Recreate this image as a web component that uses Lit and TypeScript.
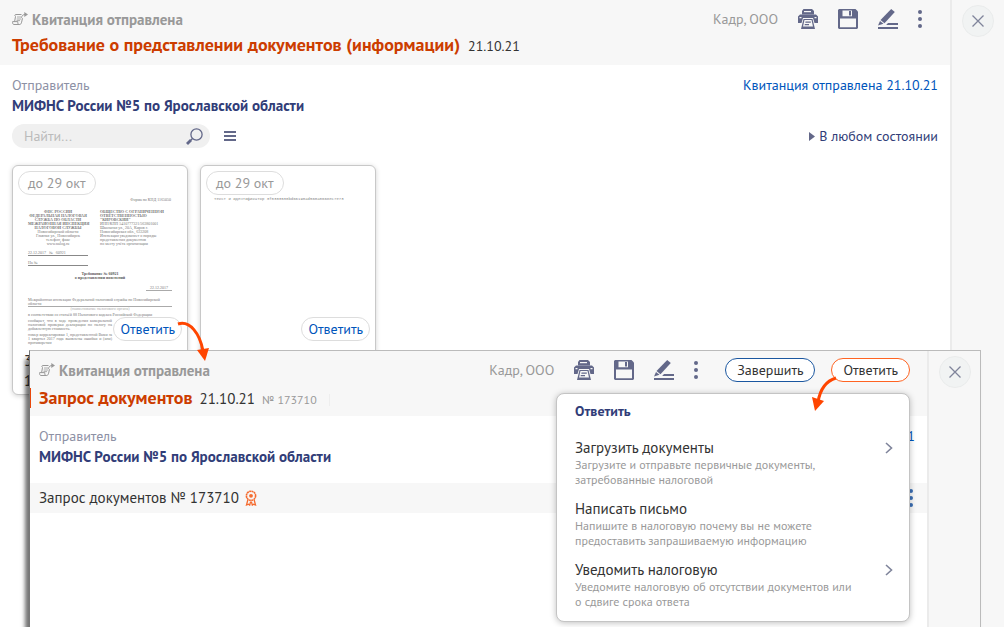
import { LitElement, html, css, svg } from "lit";
import { customElement, property } from "lit/decorators.js";

const base = css`
  * { box-sizing: border-box; }
  button, input { font: inherit; color: inherit; margin: 0; padding: 0; border: 0; background: none; }
  button { cursor: pointer; }
  a { text-decoration: none; }
  svg { display: block; }
  p, h1, h2, h3, ul { margin: 0; padding: 0; }
`;

const printer = svg`<svg width="20" height="20" viewBox="0 0 20 20" fill="#636889">
  <path d="M5.500 0h8.500l2 2v3.500h-12V2z"/><path d="M6 2h7v1.200H6z" fill="#f7f7f7"/>
  <path d="M2 5.500h16l2 2V14h-3.500l-1.500-5H5l-1.500 5H0V7.500z"/>
  <path d="M5.500 10h9l2.500 10H3z"/><path d="M6.500 11h7l1.500 6.500H5z" fill="#f7f7f7"/>
  <path d="M7.500 12.500h5.300v1.200H7.300zM6.800 15h4.200v1.200H6.600z"/><path d="M1.500 8h2v1.200h-2zM16.500 8h2v1.200h-2z" fill="#f7f7f7"/></svg>`;
const floppy = svg`<svg width="20" height="20" viewBox="0 0 20 20">
  <path d="M1 0h16.500L20 2.500V19l-1 1H1l-1-1V1z" fill="#636889"/>
  <path d="M4.500 1.500H14v5.800H4.500zM2 9.500h16v8.700H2z" fill="#f7f7f7"/>
  <path d="M11 2h2v4.500h-2z" fill="#636889"/></svg>`;
const pencil = svg`<svg width="20" height="20" viewBox="0 0 20 20" fill="#636889">
  <path d="M13.200 0l3.600 3L6.500 14.200 2.500 11z"/><path d="M2 12l3.500 2.800L0 16.500z"/>
  <path d="M10 14H20v2H8.200zM0 18h20v2H0z"/></svg>`;
const dots = svg`<svg width="4" height="20" viewBox="0 0 4 20" fill="#636889">
  <circle cx="2" cy="3" r="2"/><circle cx="2" cy="10" r="2"/><circle cx="2" cy="17" r="2"/></svg>`;
const receipt = svg`<svg width="16" height="14" viewBox="0 0 16 14" fill="none" stroke="#999">
  <path d="M9.500 2.500H4C2.700 2.500 2.500 4 3.500 4.500L2.600 9.600M.6 9.600h5.200c-.2 1.700.3 2.900 1.500 2.900H2C.8 12.500.4 11.200.6 9.600zM7.300 12.500c1.400 0 2-.8 2.300-2.300l.9-4"/>
  <path d="M5 5h4M4.700 7h4.500M4.500 8.600h3.500" stroke-width=".8"/>
  <path d="M9.500 5.800c.3-2.300 1.500-3.300 4-3.300"/><path d="M12.300 0l3.700 2.500-3.700 2.500z" fill="#999" stroke="none"/></svg>`;
const cross = svg`<svg width="12" height="12" viewBox="0 0 12 12" stroke="#7f849b" stroke-width="1.300"><path d="M.5.5l11 11M11.500.5l-11 11"/></svg>`;
const chevron = svg`<svg width="8" height="12" viewBox="0 0 8 12" fill="none" stroke="#7f849b" stroke-width="1.600"><path d="M1 1l5.500 5L1 11"/></svg>`;

/** Grey heading strip with status, title and document tools. */
@customElement("doc-header")
class DocHeader extends LitElement {
  @property() heading = "";
  @property() date = "";
  @property() number = "";

  static styles = [base, css`
    :host { display: block; background: #f7f7f7; }
    .bar { display: flex; justify-content: space-between; height: 65px; padding: 8px 17px 0 12px; }
    :host([framed]) .bar { padding-left: 9px; }
    .status { display: flex; align-items: center; gap: 4px; height: 22px; font-size: 15px; font-weight: 700; color: #999; }
    .title { display: flex; align-items: baseline; gap: 8px; line-height: 30px; white-space: nowrap; }
    :host([framed]) .title { gap: 7px; line-height: 34px; }
    h1 { font-size: 18px; font-weight: 700; color: #cc3d00; }
    .date { font-size: 14px; color: #333; }
    :host([framed]) .date { font-size: 15px; }
    .number { font-size: 12px; color: #999; padding-right: 12px; border-right: 1px solid #eee; line-height: 12px; }
    .tools { display: flex; align-items: center; gap: 20px; height: 22px; }
    .org { font-size: 14px; color: #999; white-space: nowrap; }
    .more { padding-right: 11px; }
    :host([framed]) .more { padding-right: 7px; }
  `];

  render() {
    return html`<header class="bar">
      <div>
        <div class="status">${receipt}<span>Квитанция отправлена</span></div>
        <div class="title"><h1>${this.heading}</h1><span class="date">${this.date}</span>
          ${this.number ? html`<span class="number">${this.number}</span>` : ""}</div>
      </div>
      <div class="tools">
        <span class="org">Кадр, ООО</span>
        <button aria-label="Печать">${printer}</button>
        <button aria-label="Сохранить">${floppy}</button>
        <button aria-label="Подписать">${pencil}</button>
        <button class="more" aria-label="Ещё">${dots}</button>
        <slot></slot>
      </div>
    </header>`;
  }
}

/** Sender caption and name with the receipt link. */
@customElement("doc-sender")
class DocSender extends LitElement {
  static styles = [base, css`
    :host { display: flex; justify-content: space-between; line-height: 20px; font-size: 14px; }
    .label { color: #8d91a5; }
    .name { font-size: 15px; font-weight: 700; color: #313d78; line-height: 22px; }
    a { color: #0055bb; }
  `];
  render() {
    return html`<div><p class="label">Отправитель</p><p class="name">МИФНС России №5 по Ярославской области</p></div>
      <a href="#receipt">Квитанция отправлена 21.10.21</a>`;
  }
}

@customElement("close-rail")
class CloseRail extends LitElement {
  static styles = [base, css`
    :host { display: flex; justify-content: center; align-items: flex-start; flex: none; width: 54px; padding-top: 5px; background: #f7f7f7; border-left: 2px solid #ebebeb; }
    :host([framed]) { width: 53px; }
    button { display: grid; place-items: center; width: 32px; height: 32px; border-radius: 50%; background: #f1f3f3; border: 1px solid #eaecec; }
  `];
  render() { return html`<button aria-label="Закрыть">${cross}</button>`; }
}

const actions = [
  { title: "Загрузить документы", lines: ["Загрузите и отправьте первичные документы,", "затребованные налоговой"], more: true },
  { title: "Написать письмо", lines: ["Напишите в налоговую почему вы не можете", "предоставить запрашиваемую информацию"], more: false },
  { title: "Уведомить налоговую", lines: ["Уведомите налоговую об отсутствии документов или", "о сдвиге срока ответа"], more: true },
];

@customElement("reply-menu")
class ReplyMenu extends LitElement {
  static styles = [base, css`
    :host { display: block; background: #fff; border: 1px solid #c4c4c4; border-radius: 8px; box-shadow: 0 1px 6px rgba(0,0,0,.25); padding: 7px 18px 12px; }
    h2 { font-size: 14px; font-weight: 700; line-height: 20px; color: #313d78; margin-bottom: 17px; }
    .list { display: grid; gap: 12px; }
    .item { display: grid; grid-template-columns: 1fr auto; width: 100%; text-align: left; }
    .name { font-size: 15px; line-height: 19px; color: #333; }
    .text { grid-column: 1 / -1; font-size: 12px; line-height: 15px; color: #999; }
    .text span { display: block; white-space: nowrap; }
    .arrow { align-self: center; margin-right: -2px; }
  `];
  render() {
    return html`<h2>Ответить</h2><div class="list">${actions.map((a) => html`
      <button class="item"><span class="name">${a.title}</span>
        ${a.more ? html`<span class="arrow">${chevron}</span>` : ""}
        <span class="text">${a.lines.map((l) => html`<span>${l}</span>`)}</span></button>`)}</div>`;
  }
}

@customElement("app-root")
class AppRoot extends LitElement {
  static styles = [base, css`
    :host { display: block; position: relative; min-height: 100vh; overflow: hidden; background: #fff; color: #333;
      font-family: "PT Sans", "Noto Sans", sans-serif; font-size: 14px; }
    .page { display: flex; min-height: 100vh; }
    .main { flex: 1; min-width: 0; }
    .body { padding: 10px 12px 0; }
    .filters { display: flex; align-items: center; margin-top: 7px; height: 24px; }
    .search { display: flex; align-items: center; width: 198px; height: 24px; border-radius: 12px; background: #f0f0f0; padding: 0 7px 0 12px; }
    .search input { flex: 1; min-width: 0; outline: 0; }
    .search input::placeholder { color: #bbb; }
    .burger { margin-left: 14px; }
    .state { display: flex; align-items: center; gap: 4px; margin-left: auto; color: #313d78; }
    .cards { display: flex; gap: 12px; margin-top: 17px; }
    .card { position: relative; width: 176px; height: 230px; padding: 5px; border: 1px solid #c8c8c8; border-radius: 6px; box-shadow: 0 1px 5px rgba(0,0,0,.18); background: #fff; overflow: hidden; }
    .due { display: inline-block; height: 24px; line-height: 22px; border: 1px solid #ddd; border-radius: 12px; padding: 0 9px; color: #999; }
    .reply { position: absolute; right: 5px; top: 151px; height: 24px; border: 1px solid #ddd; border-radius: 12px; background: #fff; padding: 0 6px; color: #0055bb; }
    .thumb { height: 156px; overflow: hidden; }
    .under { line-height: 20px; padding: 0 6px; font-size: 15px; }

    .sheet { display: block; font: 4px/4px "Liberation Serif", serif; color: #777; padding: 3px 10px 0; }
    .form { text-align: right; padding-right: 1px; }
    .cols { display: grid; grid-template-columns: 60px 70px; gap: 12px; margin-top: 8px; white-space: nowrap; }
    .head { text-align: center; }
    .nums { margin-top: 5px; border-bottom: 1px solid #888; }
    .rule { border-bottom: 1px solid #aaa; }
    .caption { text-align: center; margin-top: 6px; color: #555; font-weight: bold; }
    .hint { text-align: center; color: #aaa; }
    .day { margin: 6px 0 7px auto; width: 26px; text-align: center; border-bottom: 1px solid #aaa; }
    .par { margin-top: 2px; text-align: justify; }
    .short { width: 84px; }
    .mono { font: 4px/4px "Liberation Mono", monospace; color: #888; padding: 2px 8px 0; white-space: nowrap; }

    .window { position: absolute; left: 29px; right: 23px; top: 350px; bottom: 0; display: flex; background: #fff;
      border: 1px solid #bbb; border-left-color: #777; border-bottom: 0; box-shadow: -4px 9px 4px rgba(0,0,0,.55); }
    .mark { position: absolute; left: 0; top: 37px; width: 1px; height: 20px; background: #e8470a; }
    .info { padding: 10px 12px 0 9px; }
    .row { display: flex; align-items: center; gap: 6px; height: 30px; margin-top: 15px; padding: 0 13px 0 9px; background: #f7f7f7; font-size: 15px; line-height: 20px; }
    .rowmore { margin-left: auto; }
    .pill { height: 24px; border-radius: 12px; padding: 0 11px; background: #fff; border: 1px solid #1b57a0; color: #333; }
    .pills { display: flex; gap: 16px; }
    .orange { border-color: #ff6422; }
    .menu { position: absolute; right: 70px; top: 42px; width: 354px; }
    .pointer { position: absolute; pointer-events: none; }
    .first { left: 176px; top: 320px; }
    .second { right: 166px; top: 376px; }
  `];

  private thumbnail() {
    return html`<div class="sheet">
      <p class="form">Форма по КНД 1165050</p>
      <div class="cols">
        <div><div class="head"><b>ФНС РОССИИ<br>ФЕДЕРАЛЬНАЯ НАЛОГОВАЯ<br>СЛУЖБА ПО ОБЛАСТИ<br>МЕЖРАЙОННАЯ ИНСПЕКЦИЯ<br>НАЛОГОВОЙ СЛУЖБЫ</b><br>Новосибирской области<br>Главная ул., Новосибирск<br>телефон, факс<br>www.nalog.ru</div>
          <p class="nums">22.12.2017 &nbsp; № &nbsp; 60921</p><p class="nums">На №</p></div>
        <div><b>ОБЩЕСТВО С ОГРАНИЧЕННОЙ<br>ОТВЕТСТВЕННОСТЬЮ<br>"КИРОВСКИЙ"</b><br>ИНН/КПП 5410777321/563801001<br>Школьная ул., 20А, Киров г.<br>Новосибирская обл., 633208<br>Инспекция уведомляет о порядке<br>представления документов<br>по месту учёта организации</div>
      </div>
      <p class="caption">Требование № 60921<br>о представлении пояснений</p>
      <p class="day">22.12.2017</p>
      <p>Межрайонная инспекция Федеральной налоговой службы по Новосибирской</p><p class="rule">области</p>
      <p class="hint">(наименование налогового органа)</p>
      <p class="par">в соответствии со статьёй 88 Налогового кодекса Российской Федерации</p>
      <p class="par short">сообщает, что в ходе проведения камеральной налоговой проверки декларации по налогу на добавленную стоимость.</p>
      <p class="par short">номер корректировки 1, представленной Вами за 1 квартал 2017 года выявлены ошибки и (или) противоречия</p>
    </div>`;
  }

  render() {
    return html`
      <div class="page">
        <main class="main">
          <doc-header heading="Требование о представлении документов (информации)" date="21.10.21"></doc-header>
          <div class="body">
            <doc-sender></doc-sender>
            <div class="filters">
              <label class="search"><input type="text" aria-label="Найти" placeholder="Найти...">
                <svg width="17" height="17" viewBox="0 0 17 17" fill="none" stroke="#636889"><circle cx="10.500" cy="6.500" r="5.600" stroke-width="1.300"/><path d="M6.500 10.500L4.500 12.500" stroke-width="1.300"/><path d="M5 12L1 16" stroke-width="2.800"/></svg></label>
              <button class="burger" aria-label="Меню"><svg width="12" height="12" viewBox="0 0 12 12" fill="#636889"><path d="M0 1h12v2H0zM0 5h12v2H0zM0 9h12v2H0z"/></svg></button>
              <button class="state"><svg width="6" height="9" viewBox="0 0 6 9" fill="#636889"><path d="M0 0l6 4.500L0 9z"/></svg>В любом состоянии</button>
            </div>
            <section class="cards">
              <article class="card"><span class="due">до 29 окт</span><div class="thumb">${this.thumbnail()}</div>
                <button class="reply">Ответить</button><p class="under">3<br>1</p></article>
              <article class="card"><span class="due">до 29 окт</span><div class="thumb"><p class="mono">Текст и идентификатор 3f0303530bd66190ad560a0668ec7e73</p></div>
                <button class="reply">Ответить</button></article>
            </section>
          </div>
        </main>
        <close-rail></close-rail>
      </div>
      <section class="window">
        <div class="mark"></div>
        <div class="main">
          <doc-header framed heading="Запрос документов" date="21.10.21" number="№ 173710">
            <div class="pills"><button class="pill">Завершить</button><button class="pill orange">Ответить</button></div>
          </doc-header>
          <div class="info"><doc-sender></doc-sender></div>
          <div class="row"><span>Запрос документов № 173710</span>
            <svg width="12" height="16" viewBox="0 0 12 16" fill="none" stroke="#f56b2f"><circle cx="6" cy="5.800" r="4.600" stroke-width="1.600" stroke-dasharray="2 .4"/><circle cx="6" cy="5.800" r="1.900" fill="#f56b2f" stroke="none"/><path d="M2.800 10L1.500 15l2-.8 1.200.9.900-3.500M9.200 10l1.300 5-2-.8-1.200.9-.9-3.500" stroke-width="1.300"/></svg>
            <button class="rowmore" aria-label="Действия"><svg width="6" height="20" viewBox="0 0 6 20" fill="#3c6fb4"><circle cx="3" cy="3" r="2"/><circle cx="3" cy="10" r="2"/><circle cx="3" cy="17" r="2"/></svg></button>
          </div>
        </div>
        <close-rail framed></close-rail>
        <reply-menu class="menu"></reply-menu>
      </section>
      <svg class="pointer first" width="34" height="42" viewBox="0 0 34 42"><path d="M2 4C14 0 24 14 27 31" fill="none" stroke="#ff4500" stroke-width="3"/><path d="M21 30l12-2-4 13z" fill="#ff4500"/></svg>
      <svg class="pointer second" width="26" height="36" viewBox="0 0 26 36"><path d="M24 2C14 5 8 14 6 26" fill="none" stroke="#ff4500" stroke-width="3"/><path d="M0 21l12 4-9 10z" fill="#ff4500"/></svg>
    `;
  }
}
